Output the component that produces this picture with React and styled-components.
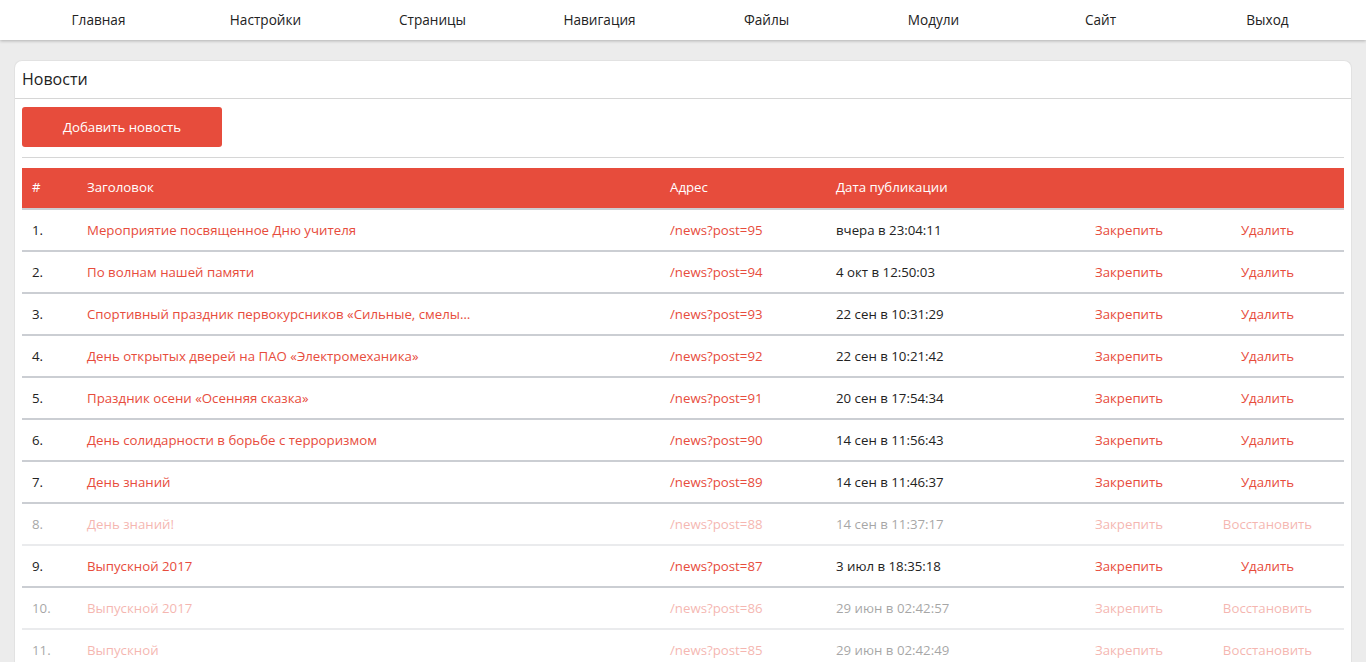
import React from 'react';
import styled, { createGlobalStyle } from 'styled-components';

const GlobalStyle = createGlobalStyle`
  html, body {
    margin: 0;
    padding: 0;
    background: #ececec;
    font-family: "Open Sans", "Noto Sans", sans-serif;
    font-size: 13.25px;
    color: #222;
  }
  * { box-sizing: border-box; }
`;

const Nav = styled.nav`
  height: 40px;
  background: #fff;
  box-shadow: 0 1px 3px rgba(0, 0, 0, 0.25);
  display: grid;
  grid-template-columns: repeat(8, 1fr);
  padding: 0 15px 2px;
  align-items: center;
`;

const NavItem = styled.a`
  text-align: center;
  color: #222;
  text-decoration: none;
  font-size: 13.6px;
`;

const Page = styled.main`
  padding: 20px 14px 0;
`;

const Card = styled.section`
  background: #fff;
  border-radius: 8px 8px 0 0;
  border: 1px solid #e2e2e2;
  border-bottom: none;
`;

const CardTitle = styled.h1`
  margin: 0;
  font-size: 16px;
  font-weight: 400;
  color: #222;
  height: 38px;
  line-height: 36px;
  padding: 0 7px;
  border-bottom: 1px solid #d6d6d6;
`;

const Body = styled.div`
  padding: 8px 7px 0;
`;

const Toolbar = styled.div`
  padding-bottom: 10px;
  border-bottom: 1px solid #d6d6d6;
  margin-bottom: 10px;
`;

const AddButton = styled.button`
  width: 200px;
  height: 40px;
  border: none;
  border-radius: 3px;
  background: #e74c3c;
  color: #fff;
  font-family: inherit;
  font-size: 13.25px;
  padding-bottom: 2px;
  cursor: pointer;
`;

const Row = styled.div`
  display: grid;
  grid-template-columns: 55px 583px 166px 241px 124px 1fr;
  height: 42px;
  padding-bottom: ${(p) => (p.$head ? '2px' : '0')};
  align-items: center;
  border-bottom: 2px solid #cbced3;
  opacity: ${(p) => (p.$deleted ? 0.4 : 1)};
`;

const HeadRow = styled(Row)`
  background: #e74c3c;
  color: #fff;
`;

const Cell = styled.div`
  padding: 0 10px;
  white-space: nowrap;
  overflow: hidden;
  text-overflow: ellipsis;
  text-align: ${(p) => (p.$center ? 'center' : 'left')};
  color: ${(p) => (p.$red ? '#e74c3c' : 'inherit')};
`;

const HeadCell = styled(Cell)`
  color: #fff;
`;

const Title = styled(Cell)`
  max-width: 408px;
`;

const news = [
  { title: 'Мероприятие посвященное Дню учителя', post: 95, date: 'вчера в 23:04:11' },
  { title: 'По волнам нашей памяти', post: 94, date: '4 окт в 12:50:03' },
  { title: 'Спортивный праздник первокурсников «Сильные, смелые, ловкие»', post: 93, date: '22 сен в 10:31:29' },
  { title: 'День открытых дверей на ПАО «Электромеханика»', post: 92, date: '22 сен в 10:21:42' },
  { title: 'Праздник осени «Осенняя сказка»', post: 91, date: '20 сен в 17:54:34' },
  { title: 'День солидарности в борьбе с терроризмом', post: 90, date: '14 сен в 11:56:43' },
  { title: 'День знаний', post: 89, date: '14 сен в 11:46:37' },
  { title: 'День знаний!', post: 88, date: '14 сен в 11:37:17', deleted: true },
  { title: 'Выпускной 2017', post: 87, date: '3 июл в 18:35:18' },
  { title: 'Выпускной 2017', post: 86, date: '29 июн в 02:42:57', deleted: true },
  { title: 'Выпускной', post: 85, date: '29 июн в 02:42:49', deleted: true },
];

const menu = ['Главная', 'Настройки', 'Страницы', 'Навигация', 'Файлы', 'Модули', 'Сайт', 'Выход'];

export default function App() {
  return (
    <>
      <GlobalStyle />
      <Nav>
        {menu.map((m) => (
          <NavItem key={m} href="#">{m}</NavItem>
        ))}
      </Nav>
      <Page>
        <Card>
          <CardTitle>Новости</CardTitle>
          <Body>
            <Toolbar>
              <AddButton>Добавить новость</AddButton>
            </Toolbar>
            <HeadRow $head>
              <HeadCell>#</HeadCell>
              <HeadCell>Заголовок</HeadCell>
              <HeadCell>Адрес</HeadCell>
              <HeadCell>Дата публикации</HeadCell>
              <HeadCell />
              <HeadCell />
            </HeadRow>
            {news.map((n, i) => (
              <Row key={n.post} $deleted={n.deleted}>
                <Cell>{i + 1}.</Cell>
                <Title $red>{n.title}</Title>
                <Cell $red>/news?post={n.post}</Cell>
                <Cell>{n.date}</Cell>
                <Cell $red $center>Закрепить</Cell>
                <Cell $red $center>{n.deleted ? 'Восстановить' : 'Удалить'}</Cell>
              </Row>
            ))}
          </Body>
        </Card>
      </Page>
    </>
  );
}
